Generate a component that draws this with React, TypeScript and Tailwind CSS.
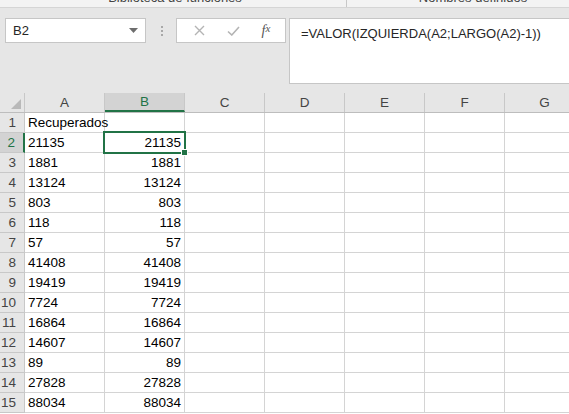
import React from 'react';

const COLS = ['A', 'B', 'C', 'D', 'E', 'F', 'G'];

const VALUES = [
  '21135', '1881', '13124', '803', '118', '57', '41408', '19419',
  '7724', '16864', '14607', '89', '27828', '88034',
];

const GREEN = '#217346';

function NameBox() {
  return (
    <div className="flex h-[25px] w-[141px] items-center justify-between border border-[#c6c6c6] bg-white pl-[7px] pr-[7px] text-[13px] text-[#262626]">
      <span>B2</span>
      <svg width="9" height="5" viewBox="0 0 9 5">
        <path d="M0 0h9L4.5 5z" fill="#6d6d6d" />
      </svg>
    </div>
  );
}

function FormulaButtons() {
  return (
    <div className="flex h-[25px] w-[110px] items-center border border-[#c6c6c6] bg-white">
      <span className="flex w-[40px] justify-center pl-[4px]">
        <svg width="11" height="11" viewBox="0 0 11 11">
          <path d="M1 1l9 9M10 1l-9 9" stroke="#b4b4b4" strokeWidth="1.4" />
        </svg>
      </span>
      <span className="flex w-[32px] justify-center">
        <svg width="13" height="10" viewBox="0 0 13 10">
          <path d="M1 5.5l3.8 3.5L12 1" stroke="#b4b4b4" strokeWidth="1.6" fill="none" />
        </svg>
      </span>
      <span className="flex flex-1 justify-center pr-[2px] font-['Liberation_Serif',serif] text-[14px] italic text-[#555]">
        f<span className="text-[11px]">x</span>
      </span>
    </div>
  );
}

export default function App() {
  return (
    <div className="h-[414px] w-[569px] overflow-hidden bg-white font-['Liberation_Sans',sans-serif]">
      {/* ribbon group labels, cut off at the top */}
      <div className="flex h-[8px] overflow-hidden border-b border-[#d5d5d5] bg-[#f3f3f3] text-[13px] leading-[14px] text-[#444]">
        <div className="w-[347px] shrink-0 border-r border-[#c8c8c8] text-center">
          <div className="-mt-[9px] pl-[4px]">Biblioteca de funciones</div>
        </div>
        <div className="w-[252px] shrink-0 text-center">
          <div className="-mt-[9px]">Nombres definidos</div>
        </div>
      </div>

      {/* formula bar */}
      <div className="flex h-[85px] items-start bg-[#e6e6e6] pt-[10px]">
        <div className="ml-[5px]">
          <NameBox />
        </div>
        <div className="ml-[14px] flex h-[25px] w-[3px] flex-col items-center justify-center gap-[2px]">
          <span className="h-[2px] w-[2px] bg-[#a8a8a8]" />
          <span className="h-[2px] w-[2px] bg-[#a8a8a8]" />
          <span className="h-[2px] w-[2px] bg-[#a8a8a8]" />
        </div>
        <div className="ml-[13px]">
          <FormulaButtons />
        </div>
        <div className="ml-[3px] h-[66px] flex-1 border border-r-0 border-[#c6c6c6] bg-white pl-[11px] pt-[5px] text-[13px] text-[#262626]">
          =VALOR(IZQUIERDA(A2;LARGO(A2)-1))
        </div>
      </div>

      {/* grid */}
      <div className="text-[13.5px] text-[#000]">
        <div className="flex h-[20px] border-b border-[#bdbdbd] bg-[#e6e6e6] text-[#444]">
          <div className="relative w-[25px] shrink-0 border-r border-[#c8c8c8]">
            <svg className="absolute bottom-[3px] right-[3px]" width="10" height="10" viewBox="0 0 10 10">
              <path d="M10 0v10H0z" fill="#b9b9b9" />
            </svg>
          </div>
          {COLS.map((c) => (
            <div
              key={c}
              className={`flex w-[80px] shrink-0 items-center justify-center border-r border-[#c8c8c8] pt-[1px] ${
                c === 'B' ? 'border-b-2 border-b-[#217346] bg-[#d3d3d3] text-[#217346]' : ''
              }`}
            >
              {c}
            </div>
          ))}
        </div>

        {Array.from({ length: 15 }, (_, i) => {
          const row = i + 1;
          const a = row === 1 ? 'Recuperados' : VALUES[i - 1];
          const b = row === 1 ? '' : VALUES[i - 1];
          const sel = row === 2;
          return (
            <div key={row} className="relative flex h-[20px]">
              <div
                className={`flex w-[25px] shrink-0 items-center justify-end border-b border-r border-[#c8c8c8] pr-[8px] pt-[2px] ${
                  sel ? 'border-r-2 border-r-[#217346] bg-[#d3d3d3] text-[#217346]' : 'bg-[#e6e6e6] text-[#444]'
                }`}
              >
                {row}
              </div>
              <div className="flex w-[80px] shrink-0 items-center overflow-visible whitespace-nowrap border-b border-r border-[#d4d4d4] pl-[3px] pt-[2px]">
                {a}
              </div>
              <div
                className={`relative flex w-[80px] shrink-0 items-center justify-end border-b border-r border-[#d4d4d4] pr-[3px] pt-[2px] ${
                  sel ? 'z-10' : ''
                }`}
              >
                {b}
                {sel ? (
                  <>
                    <div className="absolute -left-[2px] -top-[2px] h-[23px] w-[83px] border-2 border-[#217346]" />
                    <div
                      className="absolute -bottom-[4px] -right-[4px] h-[7px] w-[7px] border border-white"
                      style={{ backgroundColor: GREEN }}
                    />
                  </>
                ) : null}
              </div>
              {COLS.slice(2).map((c) => (
                <div key={c} className="w-[80px] shrink-0 border-b border-r border-[#d4d4d4]" />
              ))}
            </div>
          );
        })}
      </div>
    </div>
  );
}
